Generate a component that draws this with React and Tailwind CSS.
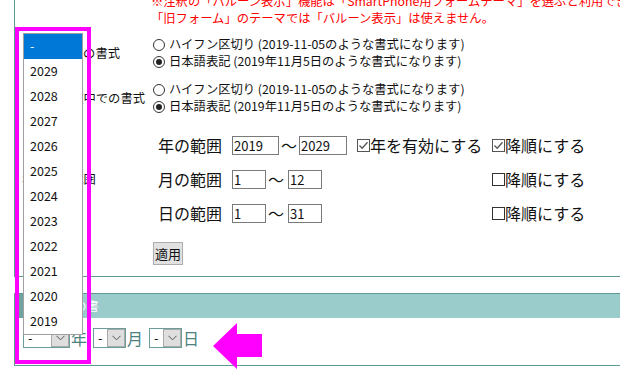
import React from "react";

const FONT = { fontFamily: '"Noto Sans CJK JP", "Noto Sans", sans-serif' };

function Radio({ checked, children }) {
  return (
    <div className="flex items-center h-[17px]">
      <span className="ml-[2px] w-[12px] h-[12px] rounded-full border border-[#333] bg-white flex items-center justify-center">
        {checked && <span className="w-[6px] h-[6px] rounded-full bg-[#222]" />}
      </span>
      <span className="ml-[4px] whitespace-nowrap">{children}</span>
    </div>
  );
}

function Check({ checked, children }) {
  return (
    <div className="flex items-center">
      <span className={"w-[13px] h-[13px] border bg-white flex items-center justify-center " + (checked ? "border-[#555]" : "border-[#333]")}>
        {checked && (
          <svg width="11" height="11" viewBox="0 0 11 11">
            <path d="M1.5 5.5 L4.2 8.2 L9.5 2.2" fill="none" stroke="#555" strokeWidth="1.3" />
          </svg>
        )}
      </span>
      <span className="whitespace-nowrap">{children}</span>
    </div>
  );
}

function Input({ w, value }) {
  return (
    <span className={"h-[19px] border border-[#7a7a7a] bg-white text-[13px] leading-[17px] pl-[1px] flex items-center " + w}>
      {value}
    </span>
  );
}

function Select({ w }) {
  return (
    <span className={"h-[20px] border border-[#6e9c9a] bg-white flex " + w}>
      <span className="flex-1 pl-[4px] text-[13px] leading-[18px] text-[#111]">-</span>
      <span className="w-[18px] h-full bg-[#dedede] border border-[#a9a9a9] flex items-center justify-center">
        <svg width="9" height="6" viewBox="0 0 9 6">
          <path d="M0.5 0.8 L4.5 4.8 L8.5 0.8" fill="none" stroke="#555" strokeWidth="1" />
        </svg>
      </span>
    </span>
  );
}

export default function App() {
  const years = ["-", "2029", "2028", "2027", "2026", "2025", "2024", "2023", "2022", "2021", "2020", "2019"];
  return (
    <div className="relative w-[620px] h-[390px] overflow-hidden bg-white text-[#111]" style={FONT}>
      {/* settings panel */}
      <div className="ml-[14px] h-[284px] border-l border-b border-[#5f9995] pl-[7px] text-[12.3px]">
        <div className="-mt-[7px]">
          <div className="pl-[129px] text-[#ff0000] leading-[16px] whitespace-nowrap">
            <div>※注釈の「バルーン表示」機能は「SmartPhone用フォームテーマ」を選ぶと利用できます。</div>
            <div className="mt-[1px]">「旧フォーム」のテーマでは「バルーン表示」は使えません。</div>
          </div>

          <div className="mt-[10px] flex">
            <div className="w-[129px] self-center whitespace-nowrap">フォーム上の書式</div>
            <div>
              <Radio>ハイフン区切り (2019-11-05のような書式になります)</Radio>
              <Radio checked>日本語表記 (2019年11月5日のような書式になります)</Radio>
            </div>
          </div>

          <div className="mt-[11px] flex">
            <div className="w-[129px] self-center whitespace-nowrap">メール本文中での書式</div>
            <div>
              <Radio>ハイフン区切り (2019-11-05のような書式になります)</Radio>
              <Radio checked>日本語表記 (2019年11月5日のような書式になります)</Radio>
            </div>
          </div>

          <div className="mt-[13px] flex">
            <div className="w-[129px] self-center whitespace-nowrap">年月日の範囲</div>
            <div className="pl-[7px] text-[16px]">
              <div className="h-[34px] flex items-center">
                <span className="w-[74px]">年の範囲</span>
                <span className="w-[125px] flex items-center">
                  <Input w="w-[47px]" value="2019" />
                  <span className="ml-[2px] w-[18px]">〜</span>
                  <Input w="w-[48px]" value="2029" />
                </span>
                <span className="w-[135px]"><Check checked>年を有効にする</Check></span>
                <Check checked>降順にする</Check>
              </div>
              <div className="h-[34px] flex items-center">
                <span className="w-[74px]">月の範囲</span>
                <span className="w-[125px] flex items-center">
                  <Input w="w-[34px]" value="1" />
                  <span className="ml-[2px] w-[20px]">〜</span>
                  <Input w="w-[34px]" value="12" />
                </span>
                <span className="w-[135px]" />
                <Check>降順にする</Check>
              </div>
              <div className="h-[34px] flex items-center">
                <span className="w-[74px]">日の範囲</span>
                <span className="w-[125px] flex items-center">
                  <Input w="w-[34px]" value="1" />
                  <span className="ml-[2px] w-[20px]">〜</span>
                  <Input w="w-[34px]" value="31" />
                </span>
                <span className="w-[135px]" />
                <Check>降順にする</Check>
              </div>
            </div>
          </div>

          <div className="mt-[12px] pl-[131px]">
            <span className="inline-flex items-center justify-center h-[23px] w-[30px] bg-[#e1e1e1] border border-[#adadad] text-[13px]">適用</span>
          </div>
        </div>
      </div>

      {/* preview box */}
      <div className="mt-[16px] ml-[14px] border-l border-b border-[#5f9995]">
        <div className="h-[25px] bg-[#9acccc] border-t border-[#5f9995] flex items-center text-white text-[12.3px]">
          <span className="w-[8px] h-full bg-[#6fa3a0]" />
          <span className="pl-[2px]">生年月日の書</span>
        </div>
        <div className="pt-[10px] pb-[17px] pl-[8px] flex items-center text-[16px] text-[#4c817f] leading-[20px]">
          <Select w="w-[47px]" />
          <span className="ml-[1px] mr-[6px]">年</span>
          <Select w="w-[33px]" />
          <span className="ml-[1px] mr-[6px]">月</span>
          <Select w="w-[33px]" />
          <span className="ml-[1px]">日</span>
        </div>
      </div>

      {/* open dropdown list */}
      <div className="absolute left-[23px] top-[33px] w-[60px] border border-[#a0a0a0] bg-white text-[12.5px] text-[#111]">
        {years.map((y, i) => (
          <div key={y} className={"h-[25px] pl-[6px] flex items-center " + (i === 0 ? "bg-[#0078d7] text-white" : "")}>
            {y}
          </div>
        ))}
      </div>

      {/* annotation frame */}
      <div className="absolute left-[15px] top-[27px] w-[76px] h-[337px] border-4 border-[#ff00ff]" />

      {/* annotation arrow */}
      <svg className="absolute left-0 top-0" width="620" height="390" viewBox="0 0 620 390">
        <polygon points="213,346 237,323 237,334 262,334 262,357 237,357 237,369" fill="#ff00ff" />
      </svg>
    </div>
  );
}
